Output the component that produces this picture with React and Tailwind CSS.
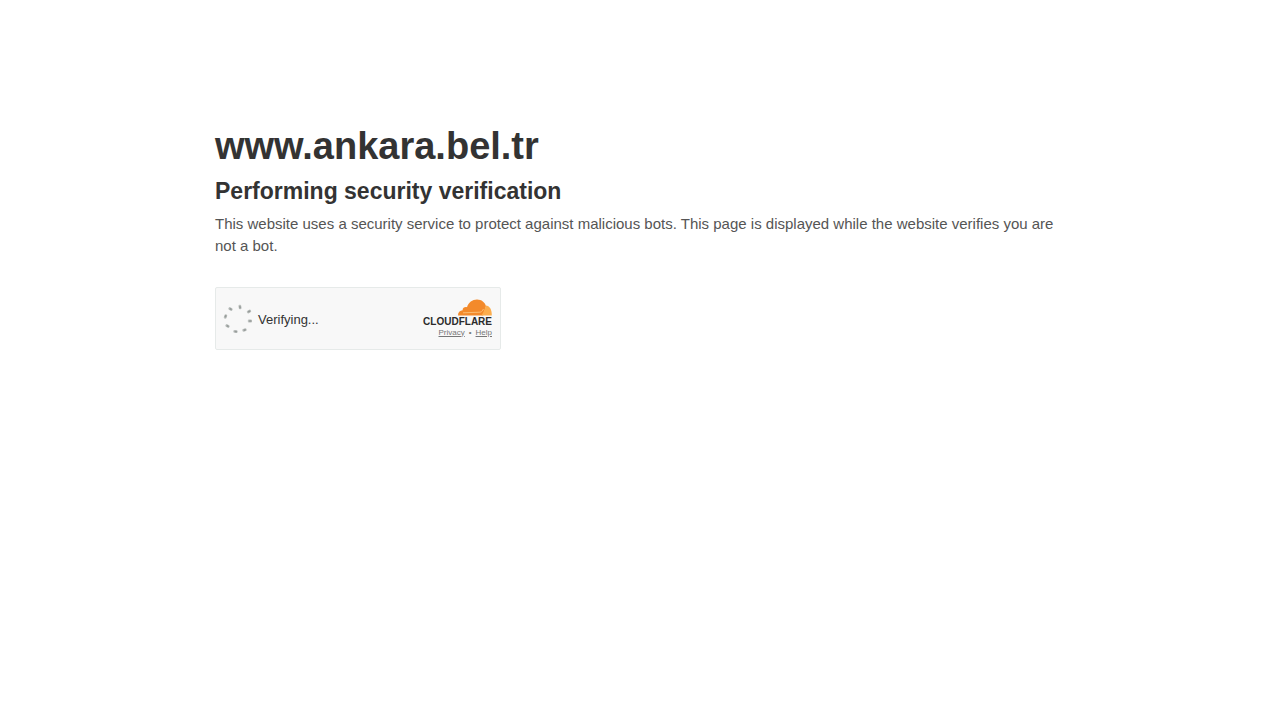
const dots = [
  [8.5, 5, 30], [18, 3, 80], [27, 7.5, -30], [28, 17, 0],
  [22.5, 26, -20], [13.5, 27.5, 10], [5.5, 22, 30], [3.5, 12.5, -70],
];

function Spinner() {
  return (
    <svg viewBox="0 0 30 30" className="size-[30px]" aria-hidden="true">
      {dots.map(([x, y, angle]) => (
        <g key={`${x}-${y}`} transform={`translate(${x} ${y}) rotate(${angle})`}>
          <rect x="-2.2" y="-1.4" width="4.4" height="2.8" rx="1.2" fill="#bcc0be" />
          <rect x="-1" y="-0.8" width="2.4" height="1.6" rx=".6" fill="#969b99" />
        </g>
      ))}
    </svg>
  );
}

function Cloud() {
  return (
    <svg viewBox="0 0 34 17" className="h-[17px] w-[34px]" aria-hidden="true">
      <path
        d="M0 16.5C0 13.2 1.8 11.4 4.6 11.2C4.6 8.8 6.8 7.6 9 8.2C10.4 3.4 14.4 .4 19 .4C23.6 .4 27 3.2 28 7.2L25 16.5Z"
        fill="#f38a2b"
      />
      <path d="M27.8 6.6C31.6 6.8 34 10.6 33.8 16.5H23.4C25.6 13.8 26.8 10.4 27.8 6.6Z" fill="#fbad4d" />
      <path d="M5 13.8L22 13.2C24 13 24.8 11.4 25.4 10" fill="none" stroke="#fbc27a" strokeWidth=".9" />
    </svg>
  );
}

export default function App() {
  return (
    <main className="mx-auto w-full max-w-[898px] px-6 pt-[123px] font-['Liberation_Sans',Arial,sans-serif] text-[#333]">
      <h1 className="text-[38px] leading-[46px] font-bold">www.ankara.bel.tr</h1>
      <h2 className="mt-2 text-[23px] leading-7 font-bold">Performing security verification</h2>
      <p className="mt-2 text-[15px] leading-[22px] text-[#555]">
        This website uses a security service to protect against malicious bots. This page is displayed while the
        website verifies you are not a bot.
      </p>
      <section className="mt-[30px] flex h-[63px] w-full max-w-[286px] items-center justify-between rounded-xs border border-[#e6eae9] bg-[#f8f8f8] pr-2 pl-[6px]">
        <div className="flex items-center gap-[6px]" role="status">
          <Spinner />
          <span className="pt-[2px] text-[13px] leading-4">Verifying...</span>
        </div>
        <div className="flex flex-col items-end">
          <Cloud />
          <span className="text-[10px] leading-[11px] font-bold text-[#2b2b2b]">CLOUDFLARE</span>
          <div className="flex items-center gap-1 text-[8px] leading-3 text-[#777]">
            <a href="#privacy" className="underline">Privacy</a>
            <span>•</span>
            <a href="#help" className="underline">Help</a>
          </div>
        </div>
      </section>
    </main>
  );
}
